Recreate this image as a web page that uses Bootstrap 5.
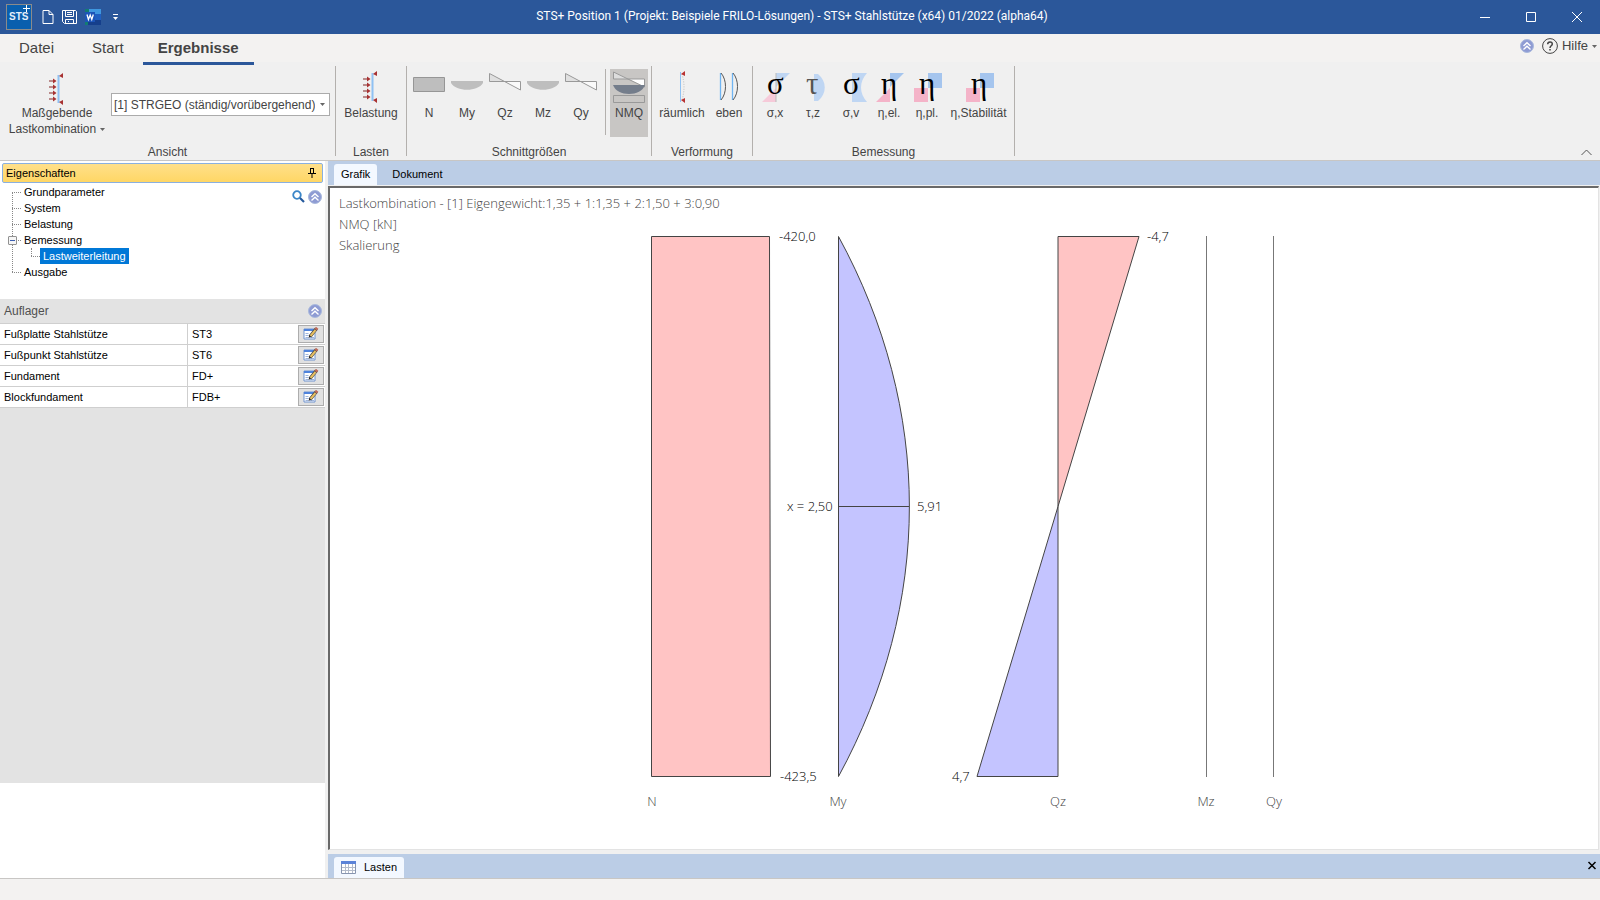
<!DOCTYPE html>
<html lang="de">
<head>
<meta charset="utf-8">
<meta name="viewport" content="width=device-width, initial-scale=1">
<title>STS+ Stahlstütze</title>
<link href="https://cdn.jsdelivr.net/npm/bootstrap@5.3.0/dist/css/bootstrap.min.css" rel="stylesheet">
<style>
  body { font-family: "Liberation Sans", Arial, sans-serif; font-size: 12px; line-height: 16px; color: #444; background: #f0f0f0; }
  svg { display: block; flex: none; overflow: visible; }
  button { font: inherit; color: inherit; background: none; border: 0; padding: 0; }
  .titlebar { display: grid; grid-template-columns: 1fr auto 1fr; height: 34px; background: #2b579a; color: #fff; }
  .titlebar h1 { font: 12px/32px Roboto, "Open Sans", sans-serif; }
  .quick-bar { padding-left: 6px; }
  .sts-logo { margin-right: 6px; }
  .sts-txt { font: 700 10px "Liberation Sans Narrow", "Liberation Sans", sans-serif; fill: #e4eefa; }
  .win-btn { width: 46px; height: 34px; }
  .ribbon-tabs { height: 28px; background: #f3f2f1; font-size: 15px; }
  .ribbon-tabs .nav-link { color: #444; padding: 3px 15px; line-height: 22px; border-bottom: 3px solid transparent; border-radius: 0; }
  .ribbon-tabs .nav-link.active { font-weight: 700; border-color: #2b579a; }
  .help-bar { padding: 0 3px 4px 0; }
  .hilfe { font-size: 13px; }
  .ribbon { height: 99px; padding: 4px 0; border-bottom: 1px solid #c8c6c4; }
  .tool-group { display: flex; flex-direction: column; justify-content: space-between; border-right: 1px solid #b3b0ad; padding: 3px 3px 0; height: 90px; text-align: center; }
  .tool-group.first-group { width: 336px; }
  .group-name { line-height: 8px; }
  .tool { width: 38px; height: 68px; padding-top: 2px; white-space: nowrap; display: flex; flex-direction: column; align-items: center; }
  .tool svg { margin-bottom: 2px; }
  .tool.tool-lasten { width: 64px; }
  .tool.tool-raum { width: 54px; }
  .tool.tool-eben { width: 40px; }
  .tool.tool-stab { width: 65px; }
  .tool.pressed { background: #c8c6c4; }
  .tool-sep { width: 1px; height: 66px; background: #b3b0ad; margin: 0 4px 0 5px; }
  .combo { width: 219px; height: 23px; border: 1px solid #ababab; border-radius: 0; margin: 24px 2px 0 0; padding: 0 14px 0 2px; font-size: 12px; line-height: 20px; color: #444; background: #fff url("data:image/svg+xml,%3Csvg xmlns='http://www.w3.org/2000/svg' width='5' height='3'%3E%3Cpath d='M0 0h5L2.500 3z' fill='%23666'/%3E%3C/svg%3E") no-repeat right 4px center; appearance: none; }
  .side { width: 325px; background: #fff; color: #000; font-size: 11px; }
  .side-head { height: 20px; margin: 2px 2px 1px; border: 1px solid #8ab0e0; border-radius: 2px; background: linear-gradient(#ffe08a, #ffd765); padding: 0 6px 0 3px; }
  .tree { height: 115px; padding: 0 3px 0 12px; }
  .tree-tools { padding-top: 6px; }
  .tree ul { list-style: none; margin: 0; padding: 0; }
  .tree li { line-height: 16px; position: relative; padding-left: 12px; }
  .tree a { color: #000; text-decoration: none; }
  .tree li::before { content: ""; position: absolute; left: 0; top: 8px; width: 9px; border-top: 1px dotted #888; }
  .tree li::after { content: ""; position: absolute; left: 0; top: 8px; bottom: -8px; border-left: 1px dotted #888; }
  .tree li:last-child::after { display: none; }
  .tree .sub { padding-left: 7px; }
  .tree .sub li { padding-left: 9px; }
  .tree .sub li::after { display: block; top: 0; bottom: 8px; }
  .tree .sub a { display: inline-block; background: #0078d7; color: #fff; padding: 0 3px; }
  .toggler { position: absolute; left: -4px; top: 4px; width: 9px; height: 9px; border: 1px solid #919191; border-radius: 1px; background: #f6f6f6; z-index: 1; }
  .toggler::after { content: ""; position: absolute; left: 1px; right: 1px; top: 3px; height: 1px; background: #3c5fb0; }
  .side-sec { height: 25px; background: #e3e3e3; border-bottom: 1px solid #cfcfcf; color: #505050; font-size: 12px; padding: 0 3px 0 4px; }
  .props { width: 100%; border-collapse: separate; border-spacing: 0; }
  .props th, .props td { height: 21px; padding: 0 4px; font-weight: 400; border-bottom: 1px solid #cfcfcf; line-height: 16px; }
  .props th { width: 187px; }
  .props td { border-left: 1px solid #cfcfcf; }
  .edit-btn { width: 26px; height: 18px; margin: 0 1px 0 auto; border: 1px solid #adadad; background: #e1e1e1; display: flex; align-items: center; justify-content: center; }
  .side-fill { background: #e3e3e3; }
  .side-foot { height: 95px; }
  .main-pane { padding-left: 3px; min-width: 0; }
  .doc-tabs { height: 24px; background: #bbcde6; color: #000; font-size: 11px; padding: 3px 4px 0 6px; }
  .doc-tabs .nav-link { color: #000; height: 21px; line-height: 21px; padding: 0 7px; border-radius: 3px 3px 0 0; }
  .doc-tabs .nav-link.active { background: #f3f8ff; }
  .canvas-box { background: #fff; border: 1px solid #e3e3e3; border-left: 2px solid #696969; border-top: 2px solid #696969; margin: 1px 1px 4px 0; min-height: 0; }
  .canvas-box text { font: 300 13px "Open Sans", "Noto Sans", sans-serif; fill: #000; }
  .canvas-box .muted-txt text { fill: #444; }
  .status { height: 22px; background: #f3f2f1; border-top: 1px solid #c8c6c4; }
  .greek { font: 31px "Liberation Serif", serif; fill: #000; }
  .greek.soft { fill: #555; }
</style>
</head>
<body class="vh-100 d-flex flex-column overflow-hidden">
<svg width="0" height="0" class="position-absolute">
  <defs>
    <symbol id="up" viewBox="0 0 14 14"><circle cx="7" cy="7" r="6.500" fill="#8e9bd3" stroke="#a9b9dc"/><path d="M3.500 7 7 3.700 10.500 7M3.500 10.500 7 7.200l3.500 3.300" fill="none" stroke="#fff" stroke-width="1.400"/></symbol>
    <symbol id="load" viewBox="0 0 32 32"><path d="M17.500 2v28" stroke="#8fc1f3" stroke-width="2"/><path d="M8 8h5M8 14h5M8 20h5M8 26h5" stroke="#a86a6a" stroke-width="1.500"/><path d="m12 5.500 3.500 2.500-3.500 2.500zM12 11.500l3.500 2.500-3.500 2.500zM12 17.500l3.500 2.500-3.500 2.500zM12 23.500l3.500 2.500-3.500 2.500zM18 3l4-3v5zM18 29l4-2v5z" fill="#a83232"/></symbol>
    <symbol id="bow" viewBox="0 0 32 32"><path d="M0 10h32v2c-5 9-27 9-32 0z" fill="#bebebe"/></symbol>
    <symbol id="shear" viewBox="0 0 32 32"><path d="M.5 2.500v8H16z" fill="#e0e0e0"/><path d="M16 10.500h15.500V19z" fill="#fafafa"/><path d="M.5 2.500v8h31V19z" fill="none" stroke="#999"/></symbol>
    <symbol id="edit" viewBox="0 0 16 14"><path d="M1 2h11v10H1z" fill="#fff" stroke="#6f93cf"/><path d="M1 2h11v2H1z" fill="#4f83dc"/><path d="M2.500 6.500h3M2.500 8.500h3M2.500 10.500h3M7 10.500h4" stroke="#9db4dc"/><path d="m7 9.500 6.500-8" stroke="#444" stroke-width="3.500"/><path d="m7.500 9 5-6" stroke="#e7bf62" stroke-width="2"/><path d="m12.700 2.600 1.500-1.800" stroke="#c06a5a" stroke-width="3"/><path d="m5.500 11 .8-2.700 1.700 1.400z" fill="#222"/></symbol>
  </defs>
</svg>

<header class="titlebar">
  <div class="quick-bar d-flex align-items-center">
    <svg class="sts-logo" viewBox="0 0 26 26" width="26" height="26"><rect x=".5" y=".5" width="25" height="25" fill="#0a5fae" stroke="#8b8b8b"/><text class="sts-txt" x="3" y="16">STS</text><path d="M17 4.500h7M20.500 1v7" stroke="#fff"/></svg>
    <button aria-label="Neu" class="ms-1 me-2"><svg width="12" height="16" viewBox="0 0 12 16" fill="none" stroke="#fff"><path d="M1 1.500h6l4 4v9H1zM7 1.500v4h4"/></svg></button>
    <button aria-label="Speichern" class="me-2"><svg width="15" height="14" viewBox="0 0 15 14" fill="none" stroke="#fff"><path d="M.5.5h13l1 1v12h-12l-2-2zM3.500.5v6h8v-6M5 2.500h5M5 4.500h5M3.500 13V9.500h8V13M6 11.500h1"/></svg></button>
    <button aria-label="Word" class="me-2"><svg width="16" height="16" viewBox="0 0 16 16"><path d="M3 0h13v5H3z" fill="#3f97e0"/><path d="M3 5h13v6H3z" fill="#1f5fc0"/><path d="M0 0h4v4H0zM0 12h4v4H0z" fill="#137c72"/><path d="M3 11h13v5H3z" fill="#153f8c"/><path d="M0 3h10v10H0z" fill="#1c55b8"/><path d="m2 5.500 1.400 5L5.200 6l1.600 4.500L8.300 5.500" fill="none" stroke="#fff" stroke-width="1.300"/></svg></button>
    <button aria-label="Anpassen" class="ms-1"><svg width="5" height="8" viewBox="1 0 5 8" fill="#fff"><path d="M1 1h5v1H1zM1 4h5L3.500 7z"/></svg></button>
  </div>
  <h1 class="m-0 me-3">STS+ Position 1 (Projekt: Beispiele FRILO-Lösungen) - STS+ Stahlstütze (x64) 01/2022 (alpha64)</h1>
  <div class="d-flex justify-content-end">
    <button class="win-btn" aria-label="Minimieren"><svg class="mx-auto" width="10" height="10" stroke="#fff"><path d="M0 5.500h10"/></svg></button>
    <button class="win-btn" aria-label="Maximieren"><svg class="mx-auto" width="10" height="10" fill="none" stroke="#fff"><path d="M.5.5h9v9h-9z"/></svg></button>
    <button class="win-btn" aria-label="Schließen"><svg class="mx-auto" width="10" height="10" stroke="#fff"><path d="m0 0 10 10M10 0 0 10"/></svg></button>
  </div>
</header>

<nav class="ribbon-tabs d-flex justify-content-between">
  <div class="nav ps-1">
    <a class="nav-link" href="#">Datei</a>
    <a class="nav-link ms-2" href="#">Start</a>
    <a class="nav-link active ms-1" href="#">Ergebnisse</a>
  </div>
  <div class="help-bar d-flex align-items-center gap-2">
    <button aria-label="Einklappen"><svg width="14" height="14"><use href="#up"/></svg></button>
    <button class="hilfe d-flex align-items-center gap-1"><svg width="16" height="16" viewBox="0 0 16 16" fill="none" stroke="#444"><circle cx="8" cy="8" r="7.400"/><path d="M5.700 6.200c0-3 4.600-3 4.600-.2C10.300 7.800 8 7.800 8 10M8 11v1.500" stroke-width="1.500"/></svg><span>Hilfe</span><svg width="5" height="3" fill="#666"><path d="M0 0h5L2.500 3z"/></svg></button>
  </div>
</nav>

<div class="ribbon d-flex">
  <section class="tool-group first-group">
    <div class="d-flex">
      <button class="flex-grow-1 d-flex flex-column align-items-center pt-1"><svg width="32" height="32"><use href="#load"/></svg><span>Maßgebende</span><span class="d-flex align-items-center gap-1">Lastkombination <svg width="5" height="3" fill="#666"><path d="M0 0h5L2.500 3z"/></svg></span></button>
      <select class="combo" aria-label="Lastkombination"><option>[1] STRGEO (ständig/vorübergehend)</option></select>
    </div>
    <div class="group-name">Ansicht</div>
  </section>
  <section class="tool-group">
    <button class="tool tool-lasten"><svg width="32" height="32"><use href="#load"/></svg>Belastung</button>
    <div class="group-name">Lasten</div>
  </section>
  <section class="tool-group">
    <div class="d-flex">
      <button class="tool"><svg width="32" height="32"><path d="M.5 6.500h31v14H.5z" fill="#bebebe" stroke="#969696"/></svg>N</button>
      <button class="tool"><svg width="32" height="32"><use href="#bow"/></svg>My</button>
      <button class="tool"><svg width="32" height="32"><use href="#shear"/></svg>Qz</button>
      <button class="tool"><svg width="32" height="32"><use href="#bow"/></svg>Mz</button>
      <button class="tool"><svg width="32" height="32"><use href="#shear"/></svg>Qy</button>
      <div class="tool-sep"></div>
      <button class="tool pressed"><svg width="32" height="32"><path d="M.5 1v7H16z" fill="#ddd"/><path d="M16 8h15.500v8z" fill="#fff"/><path d="M.5 1v7h31v8zM.5 24.500h31v7H.5z" fill="none" stroke="#999"/><path d="M0 14h32c-4 12-28 12-32 0z" fill="#747d8b"/></svg>NMQ</button>
    </div>
    <div class="group-name">Schnittgrößen</div>
  </section>
  <section class="tool-group">
    <div class="d-flex">
      <button class="tool tool-raum"><svg width="32" height="32"><path d="M14.500 1v30" stroke="#8fc1f3"/><path d="M16 3q4 13 0 26" fill="none" stroke="#bbb" stroke-dasharray="1 1.500"/><path d="m15 3 4-3v5zM15 29l4-2v5z" fill="#b83232"/></svg>räumlich</button>
      <button class="tool tool-eben"><svg width="32" height="32" fill="none"><path d="M7.500 2v27M19.500 2v27" stroke="#6fb4f2" stroke-width="1.300"/><path d="M8 2c6 7 6 20 0 27M20 2c6 7 6 20 0 27" stroke="#555"/></svg>eben</button>
    </div>
    <div class="group-name">Verformung</div>
  </section>
  <section class="tool-group">
    <div class="d-flex">
      <button class="tool"><svg width="32" height="32"><path d="M17 2h14L17 16z" fill="#bfd6f3"/><path d="M17 17v14H3z" fill="#f6cad9"/><path d="M17 2v29" stroke="#bbb"/><text class="greek" x="8" y="23">σ</text></svg>σ,x</button>
      <button class="tool"><svg width="32" height="32"><path d="M17 3h4c9 7 9 20 0 27h-4z" fill="#bfd6f3"/><text class="greek soft" x="9" y="23">τ</text></svg>τ,z</button>
      <button class="tool"><svg width="32" height="32"><path d="M17 2h15c-8 9-8 20 0 29H17z" fill="#bfd6f3"/><text class="greek" x="8" y="23">σ</text></svg>σ,v</button>
      <button class="tool"><svg width="32" height="32"><path d="M17 2h14L17 16z" fill="#a5c5ee"/><path d="M17 17v14H3z" fill="#f4b3c8"/><text class="greek" x="8" y="23">η</text></svg>η,el.</button>
      <button class="tool"><svg width="32" height="32"><path d="M17 2h14v15H17z" fill="#a5c5ee"/><path d="M3 17h14v14H3z" fill="#f4b3c8"/><text class="greek" x="8" y="23">η</text></svg>η,pl.</button>
      <button class="tool tool-stab"><svg width="32" height="32"><path d="M17 2h14v15H17z" fill="#a5c5ee"/><path d="M3 17h14v14H3z" fill="#f4b3c8"/><text class="greek" x="8" y="23">η</text></svg>η,Stabilität</button>
    </div>
    <div class="group-name">Bemessung</div>
  </section>
  <button class="ms-auto mt-auto me-2" aria-label="Menüband einklappen"><svg width="11" height="7" fill="none" stroke="#555"><path d="m.5 6 5-5 5 5"/></svg></button>
</div>

<div class="d-flex flex-grow-1 overflow-hidden">
  <aside class="side d-flex flex-column">
    <div class="side-head d-flex align-items-center justify-content-between"><span>Eigenschaften</span>
      <svg width="8" height="10" fill="none" stroke="#000"><path d="M2 .5h4M2.500 0v5M5.500 0v5M0 5.500h8M4 6v4"/></svg></div>
    <div class="tree d-flex justify-content-between">
      <ul>
        <li><a href="#">Grundparameter</a></li>
        <li><a href="#">System</a></li>
        <li><a href="#">Belastung</a></li>
        <li><button class="toggler" aria-label="Zuklappen"></button><a href="#">Bemessung</a>
          <ul class="sub"><li><a href="#">Lastweiterleitung</a></li></ul></li>
        <li><a href="#">Ausgabe</a></li>
      </ul>
      <div class="tree-tools d-flex align-items-start gap-1">
        <button aria-label="Suchen"><svg width="12" height="14" fill="none"><circle cx="5" cy="5" r="3.800" stroke="#3b86c8" stroke-width="1.800"/><path d="m8 8 4 4" stroke="#24589c" stroke-width="2.200"/></svg></button>
        <button aria-label="Zuklappen"><svg width="14" height="14"><use href="#up"/></svg></button>
      </div>
    </div>
    <div class="side-sec d-flex align-items-center justify-content-between"><span>Auflager</span><button aria-label="Zuklappen"><svg width="14" height="14"><use href="#up"/></svg></button></div>
    <table class="props">
      <tr><th scope="row">Fußplatte Stahlstütze</th><td>ST3</td><td class="border-start-0 p-0"><button class="edit-btn" aria-label="Bearbeiten"><svg width="16" height="14"><use href="#edit"/></svg></button></td></tr>
      <tr><th scope="row">Fußpunkt Stahlstütze</th><td>ST6</td><td class="border-start-0 p-0"><button class="edit-btn" aria-label="Bearbeiten"><svg width="16" height="14"><use href="#edit"/></svg></button></td></tr>
      <tr><th scope="row">Fundament</th><td>FD+</td><td class="border-start-0 p-0"><button class="edit-btn" aria-label="Bearbeiten"><svg width="16" height="14"><use href="#edit"/></svg></button></td></tr>
      <tr><th scope="row">Blockfundament</th><td>FDB+</td><td class="border-start-0 p-0"><button class="edit-btn" aria-label="Bearbeiten"><svg width="16" height="14"><use href="#edit"/></svg></button></td></tr>
    </table>
    <div class="side-fill flex-grow-1"></div>
    <div class="side-foot"></div>
  </aside>
  <main class="main-pane flex-grow-1 d-flex flex-column">
    <div class="doc-tabs nav"><a class="nav-link active" href="#">Grafik</a><a class="nav-link ms-2" href="#">Dokument</a></div>
    <div class="canvas-box flex-grow-1">
      <svg width="100%" height="100%" viewBox="330 188 1268 660" preserveAspectRatio="xMidYMin meet">
        <g class="muted-txt">
          <text x="339" y="208">Lastkombination - [1] Eigengewicht:1,35 + 1:1,35 + 2:1,50 + 3:0,90</text>
          <text x="339" y="229">NMQ [kN]</text>
          <text x="339" y="250">Skalierung</text>
          <g text-anchor="middle"><text x="652" y="806">N</text><text x="838" y="806">My</text><text x="1058" y="806">Qz</text><text x="1206" y="806">Mz</text><text x="1274" y="806">Qy</text></g>
        </g>
        <g stroke="#444">
          <path d="M651.500 236.500h118l1 540h-119z" fill="#ffc4c4"/>
          <path d="M838.500 236.500C933 410 933 603 838.500 776.500z" fill="#c4c4ff"/>
          <path d="M838.500 506.500h71"/>
          <path d="M1058 236.500h81L1058 506.500z" fill="#ffc4c4"/>
          <path d="M1058 506.500v270h-81z" fill="#c4c4ff"/>
          <path d="M1206.500 236v541M1273.500 236v541" stroke="#777"/>
        </g>
        <text x="779" y="241">-420,0</text><text x="780" y="781">-423,5</text>
        <text x="787" y="511">x = 2,50</text><text x="917" y="511">5,91</text>
        <text x="1147" y="241">-4,7</text><text x="952" y="781">4,7</text>
      </svg>
    </div>
    <div class="doc-tabs nav justify-content-between"><a class="nav-link active d-flex align-items-center" href="#"><svg class="me-2" width="15" height="13"><path d="M.5.5h14v12H.5z" fill="#fff" stroke="#8795b0"/><path d="M0 0h15v3H0z" fill="#5b83d8"/><path d="M1 6.500h13M1 9.500h13M4.500 3v9M7.500 3v9M11.500 3v9" stroke="#b4bccb"/></svg>Lasten</a>
      <button class="pb-1" aria-label="Schließen"><svg width="8" height="7" stroke="#000" stroke-width="1.500"><path d="m.5 0 7 7M7.500 0l-7 7"/></svg></button></div>
  </main>
</div>
<footer class="status"></footer>
<script src="https://cdn.jsdelivr.net/npm/bootstrap@5.3.0/dist/js/bootstrap.bundle.min.js"></script>
</body>
</html>
